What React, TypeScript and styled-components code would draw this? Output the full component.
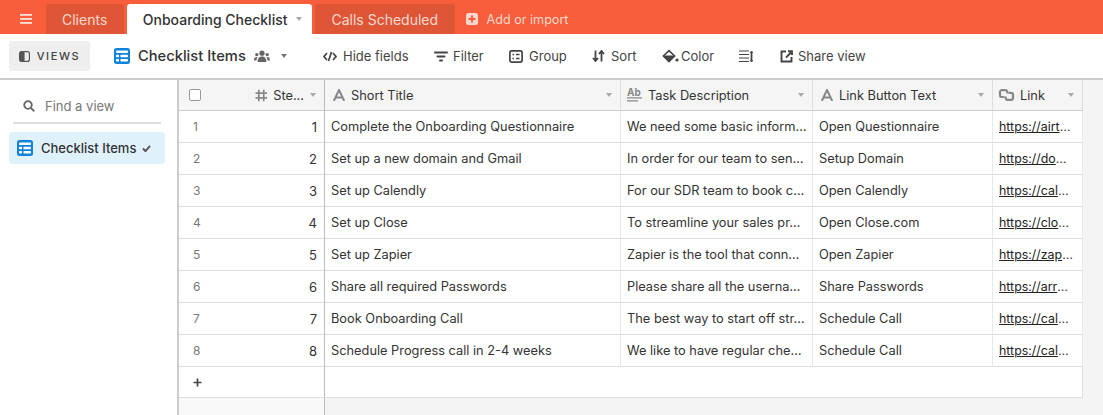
import React from 'react'
import styled, { createGlobalStyle } from 'styled-components'

const GlobalStyle = createGlobalStyle`
  html, body {
    margin: 0;
    padding: 0;
    background: #fff;
  }
  body {
    font-family: Inter, "Liberation Sans", sans-serif;
    -webkit-font-smoothing: antialiased;
  }
`

const Page = styled.div`
  width: 1103px;
  height: 415px;
  overflow: hidden;
  display: flex;
  flex-direction: column;
  color: #333;
`

const TabBar = styled.div`
  height: 34px;
  flex: none;
  background: #f95e3c;
  display: flex;
  align-items: flex-end;
  padding-left: 20px;
`

const Burger = styled.div`
  width: 26px;
  height: 30px;
  display: flex;
  align-items: center;
`

const Tab = styled.div<{ $active?: boolean }>`
  height: 30px;
  margin-right: 3px;
  padding: 0 ${(p) => (p.$active ? 10 : 16.5)}px 0 16px;
  display: flex;
  align-items: center;
  gap: 9px;
  font-size: 14px;
  border-radius: 3px 3px 0 0;
  background: ${(p) => (p.$active ? '#fff' : '#df5637')};
  color: ${(p) => (p.$active ? '#333' : '#fcd9cf')};
  font-weight: ${(p) => (p.$active ? 500 : 400)};
`

const AddButton = styled.div`
  height: 30px;
  display: flex;
  align-items: center;
  gap: 9px;
  padding-left: 8px;
  font-size: 12.6px;
  color: #fdd7cd;
`

const Toolbar = styled.div`
  height: 44px;
  flex: none;
  display: flex;
  align-items: center;
  padding-left: 9px;
  border-bottom: 2px solid #ccc;
`

const ViewsButton = styled.div`
  width: 81px;
  height: 30px;
  border-radius: 3px;
  background: #eee;
  display: flex;
  align-items: center;
  justify-content: center;
  gap: 7px;
  font-size: 11px;
  font-weight: 500;
  letter-spacing: 1.6px;
  color: #444;
`

const ViewName = styled.div`
  margin-left: 24px;
  width: 209px;
  flex: none;
  display: flex;
  align-items: center;
  font-size: 14.7px;
  font-weight: 500;
  color: #333;
`

const ViewNameText = styled.span`
  margin: 0 8px;
`

const ToolButton = styled.div<{ $gap?: number; $width: number }>`
  width: ${(p) => p.$width}px;
  display: flex;
  align-items: center;
  gap: ${(p) => p.$gap ?? 6}px;
  font-size: 13px;
  color: #444;
  flex: none;
`

const Main = styled.div`
  flex: 1;
  display: flex;
  min-height: 0;
`

const Sidebar = styled.div`
  width: 179px;
  flex: none;
  box-sizing: border-box;
  border-right: 2px solid #ccc;
  padding: 10px 12px 0 9px;
`

const FindView = styled.div`
  height: 32px;
  margin: 0 4px;
  padding-left: 10px;
  display: flex;
  align-items: center;
  gap: 10px;
  font-size: 13px;
  color: #777;
  border-bottom: 2px solid #ddd;
`

const ViewRow = styled.div`
  margin-top: 8px;
  height: 32px;
  border-radius: 3px;
  background: #dff2fb;
  padding-left: 8px;
  display: flex;
  align-items: center;
  gap: 8px;
  font-size: 13px;
  font-weight: 500;
  color: #333;
`

const CheckMark = styled.svg`
  margin-left: -2px;
`

const GridArea = styled.div`
  flex: 1;
  background: #f4f4f4;
  min-width: 0;
`

const Table = styled.div`
  width: 904px;
  display: grid;
  grid-template-columns: 146px 296px 192px 180px 90px;
  grid-template-rows: 31px repeat(8, 32px) 30px;
  background: #fff;
  border-bottom: 1px solid #ddd;
`

const HeaderCell = styled.div<{ $heavy?: boolean }>`
  background: #f5f5f5;
  border-bottom: 1px solid #ccc;
  border-right: 1px solid ${(p) => (p.$heavy ? '#bbb' : '#ddd')};
  display: flex;
  align-items: center;
  padding: 0 8px;
  gap: 6px;
  font-size: 12.8px;
  color: #333;
  min-width: 0;
`

const Caret = styled.span`
  margin-left: auto;
  width: 0;
  height: 0;
  border-left: 3px solid transparent;
  border-right: 3px solid transparent;
  border-top: 4px solid #aaa;
`

const ViewCaret = styled(Caret)`
  margin-left: 11px;
  border-top-color: #777;
`

const Checkbox = styled.span`
  width: 10px;
  height: 10px;
  border: 1px solid #999;
  border-radius: 2px;
  background: #fff;
  margin-left: 2px;
  margin-right: 48px;
`

const RowHead = styled.div`
  border-bottom: 1px solid #ddd;
  border-right: 1px solid #bbb;
  display: flex;
  align-items: center;
  justify-content: space-between;
  padding: 0 7px 0 14px;
  font-size: 12px;
  color: #777;
`

const StepValue = styled.span`
  font-size: 13px;
  color: #333;
`

const Cell = styled.div`
  border-bottom: 1px solid #ddd;
  border-right: 1px solid #e8e8e8;
  padding: 0 6px;
  display: flex;
  align-items: center;
  font-size: 12.8px;
  color: #333;
  white-space: nowrap;
  overflow: hidden;
`

const LinkCell = styled(Cell)`
  font-size: 12.4px;
`

const LinkText = styled.span`
  text-decoration: underline;
  color: #222;
`

const AddRowHead = styled(RowHead)`
  border-bottom: none;
  color: #444;
`

const AddRowRest = styled.div`
  grid-column: 2 / span 4;
  border-right: 1px solid #ddd;
`

const FootFrozen = styled.div`
  width: 145px;
  height: 100%;
  background: #f9f9f9;
  border-right: 1px solid #bbb;
`

const FieldIcon = styled.svg`
  margin-left: -2px;
  flex: none;
  overflow: visible;
`

const TableIcon = () => (
  <svg width="16" height="16" viewBox="0 0 16 16">
    <rect width="16" height="16" rx="2.5" fill="#1283da" />
    <g fill="#fff">
      <rect x="2" y="2.4" width="12" height="2.6" rx="0.8" />
      <rect x="2" y="6.7" width="3" height="2.6" rx="0.8" />
      <rect x="6.4" y="6.7" width="7.6" height="2.6" rx="0.8" />
      <rect x="2" y="11" width="3" height="2.6" rx="0.8" />
      <rect x="6.4" y="11" width="7.6" height="2.6" rx="0.8" />
    </g>
  </svg>
)

const TextIcon = () => (
  <svg width="12" height="12" viewBox="0 0 12 12" fill="none" stroke="#888" strokeWidth="2">
    <path d="M0.8 12 L6 1 L11.2 12 M2.6 8.4 H9.4" />
  </svg>
)

const LongTextIcon = () => (
  <FieldIcon width="15" height="16" viewBox="0 0 15 16">
    <text x="0" y="9" fontSize="10" fontWeight="700" fill="#888" fontFamily="Inter, sans-serif">
      Ab
    </text>
    <path d="M0 10.8H15M0 13.8H11" stroke="#888" strokeWidth="1.3" />
  </FieldIcon>
)

const LinkIcon = () => (
  <FieldIcon width="15" height="12" viewBox="0 0 15 12" fill="none" stroke="#888" strokeWidth="2.2">
    <path d="M5.5 8 H2.8 A1.8 1.8 0 0 1 1 6.2 V3 A1.8 1.8 0 0 1 2.8 1.2 H6.5 A1.8 1.8 0 0 1 8.3 3 V4.5" />
    <path d="M9.5 3.8 H12.2 A1.8 1.8 0 0 1 14 5.6 V9 A1.8 1.8 0 0 1 12.2 10.8 H8.5 A1.8 1.8 0 0 1 6.7 9 V7.5" />
  </FieldIcon>
)

const HashIcon = () => (
  <svg width="13" height="13" viewBox="0 0 13 13" stroke="#888" strokeWidth="1.8" fill="none">
    <path d="M4 0.5V12.5M9 0.5V12.5M0.5 4H12.5M0.5 9H12.5" />
  </svg>
)

const PeopleIcon = () => (
  <svg width="16" height="13" viewBox="0 0 16 13" fill="#666">
    <circle cx="8" cy="3.2" r="2.6" />
    <path d="M3.6 12 C3.6 8 5.5 6.6 8 6.6 C10.5 6.6 12.4 8 12.4 12Z" />
    <circle cx="2.8" cy="4.6" r="1.7" />
    <circle cx="13.2" cy="4.6" r="1.7" />
    <path d="M0 10.5 C0 8 1 7 2.8 7 L3.6 7.2 C2.8 8.2 2.6 9.2 2.5 10.5Z" />
    <path d="M16 10.5 C16 8 15 7 13.2 7 L12.4 7.2 C13.2 8.2 13.4 9.2 13.5 10.5Z" />
  </svg>
)

const rows = [
  ['Complete the Onboarding Questionnaire', 'We need some basic inform…', 'Open Questionnaire', 'https://airt'],
  ['Set up a new domain and Gmail', 'In order for our team to sen…', 'Setup Domain', 'https://do'],
  ['Set up Calendly', 'For our SDR team to book c…', 'Open Calendly', 'https://cal'],
  ['Set up Close', 'To streamline your sales pr…', 'Open Close.com', 'https://clo'],
  ['Set up Zapier', 'Zapier is the tool that conn…', 'Open Zapier', 'https://zap'],
  ['Share all required Passwords', 'Please share all the userna…', 'Share Passwords', 'https://arr'],
  ['Book Onboarding Call', 'The best way to start off str…', 'Schedule Call', 'https://cal'],
  ['Schedule Progress call in 2-4 weeks', 'We like to have regular che…', 'Schedule Call', 'https://cal'],
]

export default function App() {
  return (
    <Page>
      <GlobalStyle />
      <TabBar>
        <Burger>
          <svg width="12" height="10" viewBox="0 0 12 10" fill="#fde0d8">
            <rect y="0" width="12" height="1.8" />
            <rect y="4" width="12" height="1.8" />
            <rect y="8" width="12" height="1.8" />
          </svg>
        </Burger>
        <Tab>Clients</Tab>
        <Tab $active>
          Onboarding Checklist
          <Caret />
        </Tab>
        <Tab>Calls Scheduled</Tab>
        <AddButton>
          <svg width="12" height="12" viewBox="0 0 12 12">
            <rect width="12" height="12" rx="2.5" fill="#fdd7cd" />
            <path d="M6 2.5V9.5M2.5 6H9.5" stroke="#f95e3c" strokeWidth="2" />
          </svg>
          Add or import
        </AddButton>
      </TabBar>
      <Toolbar>
        <ViewsButton>
          <svg width="11" height="11" viewBox="0 0 11 11">
            <rect x="0.6" y="0.6" width="9.8" height="9.8" rx="2" fill="none" stroke="#555" strokeWidth="1.2" />
            <rect x="0.6" y="0.6" width="5" height="9.8" rx="1.5" fill="#555" />
          </svg>
          VIEWS
        </ViewsButton>
        <ViewName>
          <TableIcon />
          <ViewNameText>Checklist Items</ViewNameText>
          <PeopleIcon />
          <ViewCaret />
        </ViewName>
        <ToolButton $width={111}>
          <svg width="14" height="11" viewBox="0 0 14 11" fill="none" stroke="#444" strokeWidth="1.7">
            <path d="M4 2L1 5.5L4 9M10 2L13 5.5L10 9M8.5 1L5.5 10" />
          </svg>
          Hide fields
        </ToolButton>
        <ToolButton $width={75} $gap={5}>
          <svg width="14" height="11" viewBox="0 0 14 11" fill="#444">
            <rect x="0" y="0.5" width="14" height="2" rx="1" />
            <rect x="2.5" y="4.5" width="9" height="2" rx="1" />
            <rect x="5" y="8.5" width="4" height="2" rx="1" />
          </svg>
          Filter
        </ToolButton>
        <ToolButton $width={83}>
          <svg width="14" height="13" viewBox="0 0 14 13" fill="none">
            <rect x="0.9" y="0.9" width="12.2" height="11.2" rx="2" stroke="#444" strokeWidth="1.7" />
            <path d="M3.5 4.5H5M7 4.5H10.5M3.5 8.5H5M7 8.5H10.5" stroke="#444" strokeWidth="1.7" />
          </svg>
          Group
        </ToolButton>
        <ToolButton $width={70}>
          <svg width="13" height="12" viewBox="0 0 13 12" fill="none" stroke="#444" strokeWidth="1.8">
            <path d="M3.5 0.5V10.5M1 8L3.5 11L6 8M9.5 11.5V1.5M7 4L9.5 1L12 4" />
          </svg>
          Sort
        </ToolButton>
        <ToolButton $width={77} $gap={2}>
          <svg width="17" height="14" viewBox="0 0 17 14" fill="#444">
            <path d="M7 1.6L12.6 7L7 12.6L1.4 7Z" fill="none" stroke="#444" strokeWidth="1.6" />
            <path d="M0.8 6.4H13.2L7 13Z" />
            <circle cx="15" cy="11" r="1.6" />
          </svg>
          Color
        </ToolButton>
        <ToolButton $width={41}>
          <svg width="14" height="13" viewBox="0 0 14 13" fill="none" stroke="#444" strokeWidth="1.2">
            <path d="M0 1H10M0 4.5H10M0 8H10M0 11.5H10" />
            <path d="M12.5 2V11" strokeWidth="1.8" />
            <path d="M11 3L12.5 1L14 3M11 10L12.5 12L14 10" strokeWidth="1" />
          </svg>
        </ToolButton>
        <ToolButton $width={100} $gap={5}>
          <svg width="13" height="13" viewBox="0 0 13 13" fill="none" stroke="#444" strokeWidth="1.9">
            <path d="M6 1.5H1.5V11.5H11.5V7" />
            <path d="M6 7.5L11 2.5M8 1.2H12V5" />
          </svg>
          Share view
        </ToolButton>
      </Toolbar>
      <Main>
        <Sidebar>
          <FindView>
            <svg width="12" height="12" viewBox="0 0 12 12" fill="none" stroke="#666" strokeWidth="1.8">
              <circle cx="5" cy="5" r="3.8" />
              <path d="M8 8L11.3 11.3" />
            </svg>
            Find a view
          </FindView>
          <ViewRow>
            <TableIcon />
            Checklist Items
            <CheckMark width="9" height="7" viewBox="0 0 10 8" fill="none" stroke="#555" strokeWidth="2.2">
              <path d="M1 4L3.8 7L9 1" />
            </CheckMark>
          </ViewRow>
        </Sidebar>
        <GridArea>
          <Table>
            <HeaderCell $heavy>
              <Checkbox />
              <HashIcon />
              Ste...
              <Caret />
            </HeaderCell>
            <HeaderCell>
              <TextIcon />
              Short Title
              <Caret />
            </HeaderCell>
            <HeaderCell>
              <LongTextIcon />
              Task Description
              <Caret />
            </HeaderCell>
            <HeaderCell>
              <TextIcon />
              Link Button Text
              <Caret />
            </HeaderCell>
            <HeaderCell>
              <LinkIcon />
              Link
              <Caret />
            </HeaderCell>
            {rows.map((r, i) => (
              <React.Fragment key={i}>
                <RowHead>
                  {i + 1}
                  <StepValue>{i + 1}</StepValue>
                </RowHead>
                <Cell>{r[0]}</Cell>
                <Cell>{r[1]}</Cell>
                <Cell>{r[2]}</Cell>
                <LinkCell>
                  <LinkText>{r[3]}</LinkText>…
                </LinkCell>
              </React.Fragment>
            ))}
            <AddRowHead>
              <svg width="9" height="9" viewBox="0 0 9 9" stroke="#444" strokeWidth="1.7">
                <path d="M4.5 0.5V8.5M0.5 4.5H8.5" />
              </svg>
            </AddRowHead>
            <AddRowRest />
          </Table>
          <FootFrozen />
        </GridArea>
      </Main>
    </Page>
  )
}
